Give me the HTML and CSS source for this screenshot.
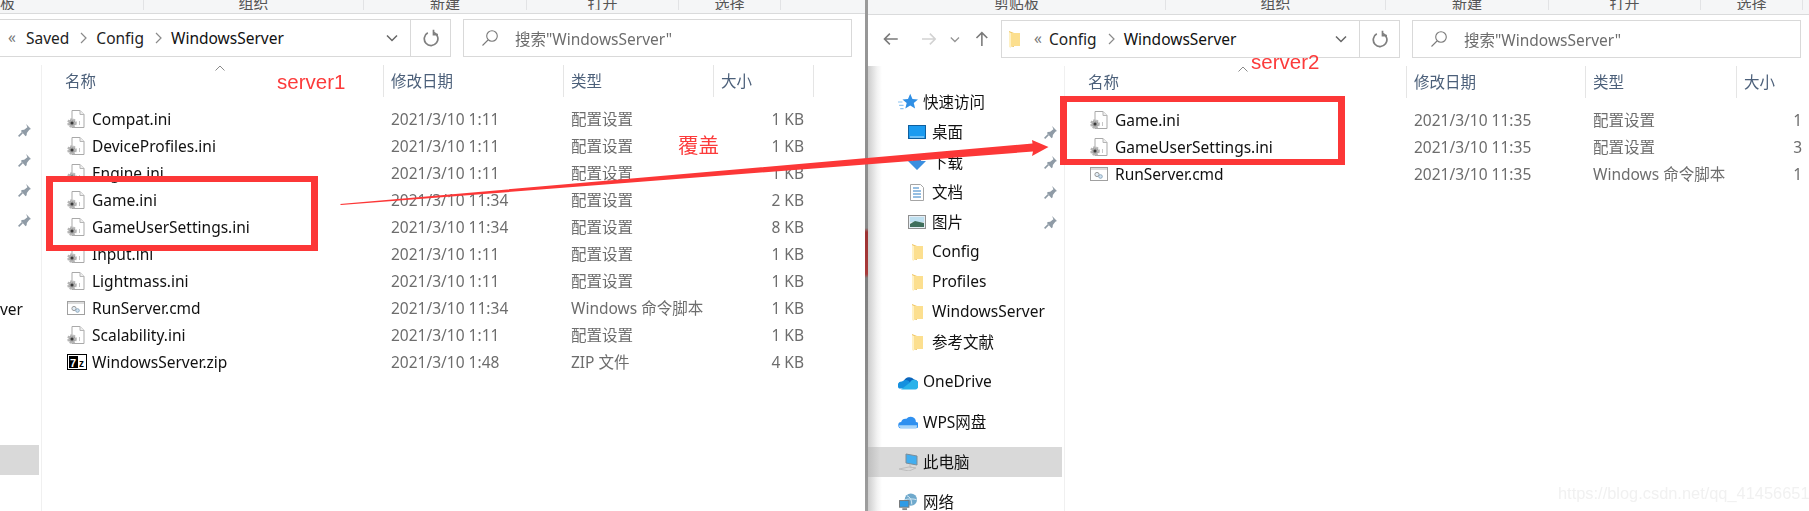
FILE: index.html
```html
<!DOCTYPE html>
<html lang="zh">
<head>
<meta charset="utf-8">
<title>WindowsServer</title>
<link rel="stylesheet" href="styles.css">
</head>
<body>
<svg class="defs" width="0" height="0" aria-hidden="true">
  <symbol id="gear-file" viewBox="0 0 18 20">
    <path d="M5 1.500h8l4 4v13H5z" fill="#fff" stroke="#a9a9a9"/>
    <path d="M13 1.500v4h4" fill="#eee" stroke="#b5b5b5"/>
    <circle cx="5" cy="14" r="3.400" fill="#a0a0a0" stroke="#b4b4b4" stroke-width="2.800" stroke-dasharray="1.800 1"/>
    <circle cx="5" cy="14" r="1.500" fill="#3a3a3a"/>
    <path d="M12.500 12v4" stroke="#c8c8c8"/>
  </symbol>
  <symbol id="cmd-file" viewBox="0 0 18 14">
    <rect x=".5" y=".5" width="17" height="13" fill="#fff" stroke="#a0a0a0"/>
    <rect x="1" y="1" width="16" height="2" fill="#dcdcdc"/>
    <circle cx="7" cy="7.500" r="2.100" fill="#e4eef6" stroke="#9a9a9a"/>
    <circle cx="10.500" cy="9.500" r="1.800" fill="#cfe2f2" stroke="#8fa9bd"/>
  </symbol>
  <symbol id="pin" viewBox="0 0 14 14">
    <path d="M8.500 1l4.500 4.500-1.500.8-2.300 3-.2 2.200-1 .8L3.700 7.500l.8-1 2.200-.2 3-2.300z" fill="#8f9ba6"/>
    <path d="M5 9l-3.500 3.500" stroke="#8f9ba6" stroke-width="1.500"/>
  </symbol>
  <symbol id="search" viewBox="0 0 18 18">
    <circle cx="11" cy="7" r="5.300" fill="none" stroke="#7a7a7a" stroke-width="1.100"/>
    <path d="M7 11l-5.500 5.500" stroke="#7a7a7a" stroke-width="1.100"/>
  </symbol>
  <symbol id="refresh" viewBox="0 0 16 18">
    <path d="M4.800 3.800A6.800 6.800 0 1 0 11 3.600" fill="none" stroke="#7f7f7f" stroke-width="1.700"/>
    <path d="M10.500 .8v4.800h4.400" fill="none" stroke="#7f7f7f" stroke-width="1.700"/>
  </symbol>
  <symbol id="chev-down" viewBox="0 0 12 8">
    <path d="M1 1.500l5 5 5-5" fill="none" stroke="#666" stroke-width="1.500"/>
  </symbol>
  <symbol id="crumb" viewBox="0 0 7 12">
    <path d="M1 1l5 5-5 5" fill="none" stroke="#8a8a8a" stroke-width="1.200"/>
  </symbol>
  <symbol id="sort" viewBox="0 0 10 6">
    <path d="M.5 5.500L5 1l4.500 4.500" fill="none" stroke="#8a8a8a"/>
  </symbol>
  <symbol id="folder" viewBox="0 0 12 18">
    <path d="M1 1l5 2v14l-5-1z" fill="#f0c869"/>
    <path d="M3 3h9v13H3z" fill="#fcdf8f"/>
    <path d="M1 2l2 1v15l-2-1z" fill="#fff1c4"/>
  </symbol>
  <symbol id="star" viewBox="0 0 18 16">
    <path d="M11 .5l2 4.800 5 .4-3.800 3.200 1.200 5-4.400-2.700-4.400 2.700 1.200-5L4 5.700l5-.4z" fill="#2f8fe5"/>
    <path d="M0 8h4M1 11h4M2 14h3" stroke="#8cc4f2"/>
  </symbol>
  <symbol id="desktop" viewBox="0 0 18 14">
    <rect x=".5" y=".5" width="17" height="13" fill="#1b9bf0" stroke="#0f5f9e"/>
    <path d="M2 12h14" stroke="#bfe3fb"/>
  </symbol>
  <symbol id="download" viewBox="0 0 18 16">
    <path d="M5 0h8v7h5l-9 9-9-9h5z" fill="#3a8fe0"/>
  </symbol>
  <symbol id="doc" viewBox="0 0 14 17">
    <path d="M.5.500h10l3 3v13H.5z" fill="#fff" stroke="#a5a5a5"/>
    <path d="M3 4h6M3 7h8M3 10h8M3 13h8" stroke="#2f7fc4"/>
  </symbol>
  <symbol id="picture" viewBox="0 0 18 14">
    <rect x=".5" y=".5" width="17" height="13" fill="#e6eef4" stroke="#8f8f8f"/>
    <rect x="2" y="2" width="14" height="5" fill="#bfe0f0"/>
    <path d="M2 9l5-3 9 2v4H2z" fill="#3f6f5c"/>
  </symbol>
  <symbol id="onedrive" viewBox="0 0 20 15">
    <path d="M6 6a6 6 0 0 1 10-1 4 4 0 0 1 4 5H6z" fill="#0a66bd"/>
    <path d="M1 14a4 4 0 0 1 3-7 5 5 0 0 1 8 1l6 6z" fill="#1590df"/>
    <path d="M12 8a3 3 0 0 1 8 3 3 3 0 0 1-3 4H3z" fill="#29b2ea"/>
  </symbol>
  <symbol id="wps" viewBox="0 0 19 14">
    <path d="M3.500 13a3 3 0 0 1-.5-6 4.500 4.500 0 0 1 5-3 5 5 0 0 1 9 3 3 3 0 0 1-.5 6z" fill="#2f90f0"/>
    <path d="M1 10h17v1.500a1.500 1.500 0 0 1-1.500 1.500h-13A2.500 2.500 0 0 1 1 10z" fill="#a6d4fa"/>
  </symbol>
  <symbol id="pc" viewBox="0 0 20 18">
    <path d="M8 1l11 2v9L8 10z" fill="#42aef0" stroke="#7d8d98"/>
    <path d="M12 11v3l5 1M1 16l10-2 7 1-7 3z" fill="none" stroke="#bdbdbd"/>
  </symbol>
  <symbol id="network" viewBox="0 0 20 19">
    <circle cx="13" cy="7" r="6.500" fill="#6fa9cc"/>
    <path d="M9 3c3 1 5 4 5 9M7 7c3-1 9-1 12 0" stroke="#d8eaf4" fill="none"/>
    <rect x="1" y="8" width="10" height="7" fill="#2f9be6" stroke="#777"/>
    <path d="M4 17h5" stroke="#888" stroke-width="2"/>
  </symbol>
  <symbol id="arrow-left" viewBox="0 0 16 14">
    <path d="M1.500 7H15M7 1.500L1.500 7 7 12.500" fill="none" stroke="currentColor" stroke-width="1.600"/>
  </symbol>
  <symbol id="arrow-up" viewBox="0 0 14 16">
    <path d="M7 15V1.500M1.500 7L7 1.500 12.500 7" fill="none" stroke="currentColor" stroke-width="1.600"/>
  </symbol>
</svg>

<main class="desktop">
  <section class="window window-left">
    <div class="ribbon">
      <div class="group group-l1"><span class="group-label label-end">剪贴板</span></div>
      <div class="group group-w220"><span class="group-label">组织</span></div>
      <div class="group group-w163"><span class="group-label">新建</span></div>
      <div class="group group-w152"><span class="group-label">打开</span></div>
      <div class="group group-w102"><span class="group-label">选择</span></div>
    </div>
    <div class="toolbar">
      <div class="address address-left">
        <div class="path path-left">
          <span class="more">«</span>
          <span class="crumb-text">Saved</span>
          <svg class="ico-crumb"><use href="#crumb"/></svg>
          <span class="crumb-text">Config</span>
          <svg class="ico-crumb"><use href="#crumb"/></svg>
          <span class="crumb-text crumb-last">WindowsServer</span>
          <svg class="ico-chev"><use href="#chev-down"/></svg>
        </div>
        <div class="refresh"><svg class="ico-refresh"><use href="#refresh"/></svg></div>
      </div>
      <div class="searchbox">
        <svg class="ico-search"><use href="#search"/></svg>
        <span>搜索"WindowsServer"</span>
      </div>
    </div>
    <div class="body">
      <nav class="nav nav-left">
        <div class="nav-row"></div>
        <div class="nav-row"><svg class="ico-pin"><use href="#pin"/></svg></div>
        <div class="nav-row"><svg class="ico-pin"><use href="#pin"/></svg></div>
        <div class="nav-row"><svg class="ico-pin"><use href="#pin"/></svg></div>
        <div class="nav-row"><svg class="ico-pin"><use href="#pin"/></svg></div>
        <div class="nav-row"></div>
        <div class="nav-row"></div>
        <div class="nav-row nav-clip"><span>WindowsServer</span></div>
        <div class="nav-row"></div>
        <div class="nav-row nav-gap"></div>
        <div class="nav-row nav-gap"></div>
        <div class="nav-row nav-gap nav-active"></div>
      </nav>
      <div class="pane">
        <div class="cols cols-left head">
          <div class="th th-name">名称<svg class="ico-sort"><use href="#sort"/></svg></div>
          <div class="th">修改日期</div>
          <div class="th">类型</div>
          <div class="th">大小</div>
        </div>
        <div class="rows">
          <div class="cols cols-left row"><div class="name"><svg class="ico-file"><use href="#gear-file"/></svg>Compat.ini</div><div class="cell">2021/3/10 1:11</div><div class="cell">配置设置</div><div class="cell size">1 KB</div></div>
          <div class="cols cols-left row"><div class="name"><svg class="ico-file"><use href="#gear-file"/></svg>DeviceProfiles.ini</div><div class="cell">2021/3/10 1:11</div><div class="cell">配置设置</div><div class="cell size">1 KB</div></div>
          <div class="cols cols-left row"><div class="name"><svg class="ico-file"><use href="#gear-file"/></svg>Engine.ini</div><div class="cell">2021/3/10 1:11</div><div class="cell">配置设置</div><div class="cell size">1 KB</div></div>
          <div class="cols cols-left row"><div class="name"><svg class="ico-file"><use href="#gear-file"/></svg>Game.ini</div><div class="cell">2021/3/10 11:34</div><div class="cell">配置设置</div><div class="cell size">2 KB</div></div>
          <div class="cols cols-left row"><div class="name"><svg class="ico-file"><use href="#gear-file"/></svg>GameUserSettings.ini</div><div class="cell">2021/3/10 11:34</div><div class="cell">配置设置</div><div class="cell size">8 KB</div></div>
          <div class="cols cols-left row"><div class="name"><svg class="ico-file"><use href="#gear-file"/></svg>Input.ini</div><div class="cell">2021/3/10 1:11</div><div class="cell">配置设置</div><div class="cell size">1 KB</div></div>
          <div class="cols cols-left row"><div class="name"><svg class="ico-file"><use href="#gear-file"/></svg>Lightmass.ini</div><div class="cell">2021/3/10 1:11</div><div class="cell">配置设置</div><div class="cell size">1 KB</div></div>
          <div class="cols cols-left row"><div class="name"><svg class="ico-cmd"><use href="#cmd-file"/></svg>RunServer.cmd</div><div class="cell">2021/3/10 11:34</div><div class="cell">Windows 命令脚本</div><div class="cell size">1 KB</div></div>
          <div class="cols cols-left row"><div class="name"><svg class="ico-file"><use href="#gear-file"/></svg>Scalability.ini</div><div class="cell">2021/3/10 1:11</div><div class="cell">配置设置</div><div class="cell size">1 KB</div></div>
          <div class="cols cols-left row"><div class="name"><span class="zip-badge"><svg class="ico-7z" viewBox="0 0 20 16"><rect x=".5" y=".5" width="19" height="15" fill="#fff" stroke="#000"/><rect x="2" y="2" width="9" height="12" fill="#000"/><text x="3" y="12.500" class="zip-seven">7</text><text x="12" y="12.500" class="zip-z">z</text></svg></span>WindowsServer.zip</div><div class="cell">2021/3/10 1:48</div><div class="cell">ZIP 文件</div><div class="cell size">4 KB</div></div>
        </div>
      </div>
    </div>
  </section>

  <div class="split"></div>

  <section class="window window-right">
    <div class="ribbon ribbon-right">
      <div class="group group-r1"><span class="group-label">剪贴板</span></div>
      <div class="group group-w220"><span class="group-label">组织</span></div>
      <div class="group group-w163"><span class="group-label">新建</span></div>
      <div class="group group-w152"><span class="group-label">打开</span></div>
      <div class="group group-w102"><span class="group-label">选择</span></div>
    </div>
    <div class="toolbar">
      <div class="navbtns">
        <svg class="ico-back"><use href="#arrow-left"/></svg>
        <svg class="ico-forward"><use href="#arrow-left"/></svg>
        <svg class="ico-recent"><use href="#chev-down"/></svg>
        <svg class="ico-up"><use href="#arrow-up"/></svg>
      </div>
      <div class="address address-right">
        <div class="path path-right">
          <svg class="ico-addr-folder"><use href="#folder"/></svg>
          <span class="more">«</span>
          <span class="crumb-text">Config</span>
          <svg class="ico-crumb"><use href="#crumb"/></svg>
          <span class="crumb-text crumb-last">WindowsServer</span>
          <svg class="ico-chev"><use href="#chev-down"/></svg>
        </div>
        <div class="refresh"><svg class="ico-refresh"><use href="#refresh"/></svg></div>
      </div>
      <div class="searchbox">
        <svg class="ico-search"><use href="#search"/></svg>
        <span>搜索"WindowsServer"</span>
      </div>
    </div>
    <div class="body">
      <nav class="nav nav-right">
        <div class="nav-row top"><svg class="ico-top"><use href="#star"/></svg><span>快速访问</span></div>
        <div class="nav-row sub"><svg class="ico-sub ico-h14"><use href="#desktop"/></svg><span>桌面</span><svg class="ico-pin"><use href="#pin"/></svg></div>
        <div class="nav-row sub"><svg class="ico-sub ico-h16"><use href="#download"/></svg><span>下载</span><svg class="ico-pin"><use href="#pin"/></svg></div>
        <div class="nav-row sub"><svg class="ico-doc"><use href="#doc"/></svg><span>文档</span><svg class="ico-pin"><use href="#pin"/></svg></div>
        <div class="nav-row sub"><svg class="ico-sub ico-h14"><use href="#picture"/></svg><span>图片</span><svg class="ico-pin"><use href="#pin"/></svg></div>
        <div class="nav-row sub"><svg class="ico-folder"><use href="#folder"/></svg><span>Config</span></div>
        <div class="nav-row sub"><svg class="ico-folder"><use href="#folder"/></svg><span>Profiles</span></div>
        <div class="nav-row sub"><svg class="ico-folder"><use href="#folder"/></svg><span>WindowsServer</span></div>
        <div class="nav-row sub"><svg class="ico-folder"><use href="#folder"/></svg><span>参考文献</span></div>
        <div class="nav-row top nav-gap"><svg class="ico-top"><use href="#onedrive"/></svg><span>OneDrive</span></div>
        <div class="nav-row top nav-gap"><svg class="ico-top"><use href="#wps"/></svg><span>WPS网盘</span></div>
        <div class="nav-row top nav-gap nav-active"><svg class="ico-top"><use href="#pc"/></svg><span>此电脑</span></div>
        <div class="nav-row top nav-gap"><svg class="ico-top"><use href="#network"/></svg><span>网络</span></div>
      </nav>
      <div class="pane">
        <div class="cols cols-right head">
          <div class="th th-name">名称<svg class="ico-sort"><use href="#sort"/></svg></div>
          <div class="th">修改日期</div>
          <div class="th">类型</div>
          <div class="th th-last">大小</div>
        </div>
        <div class="rows">
          <div class="cols cols-right row"><div class="name"><svg class="ico-file"><use href="#gear-file"/></svg>Game.ini</div><div class="cell">2021/3/10 11:35</div><div class="cell">配置设置</div><div class="cell size size-cut">1</div></div>
          <div class="cols cols-right row"><div class="name"><svg class="ico-file"><use href="#gear-file"/></svg>GameUserSettings.ini</div><div class="cell">2021/3/10 11:35</div><div class="cell">配置设置</div><div class="cell size size-cut">3</div></div>
          <div class="cols cols-right row"><div class="name"><svg class="ico-cmd"><use href="#cmd-file"/></svg>RunServer.cmd</div><div class="cell">2021/3/10 11:35</div><div class="cell">Windows 命令脚本</div><div class="cell size size-cut">1</div></div>
        </div>
      </div>
    </div>
  </section>

  <div class="mark mark-box box-one"></div>
  <div class="mark mark-box box-two"></div>
  <span class="mark mark-text text-server1">server1</span>
  <span class="mark mark-text text-server2">server2</span>
  <span class="mark mark-text text-cover">覆盖</span>
  <svg class="mark mark-arrow" viewBox="0 0 1809 511"><polygon points="340,204 341,205 1033,151.500 1032,156 1048.500,147 1032,140 1032.500,143.500"/></svg>
  <span class="watermark">https://blog.csdn.net/qq_41456651</span>
</main>
</body>
</html>
```
FILE: styles.css
```css
* { box-sizing: border-box; }

html, body {
  margin: 0;
  padding: 0;
  background: #fff;
}

body {
  width: 1809px;
  height: 511px;
  overflow: hidden;
  font-family: "Noto Sans", "Noto Sans CJK SC", sans-serif;
  font-size: 15.5px;
  color: #111;
}

.defs { position: absolute; }

.desktop {
  position: relative;
  display: flex;
  width: 1809px;
  height: 511px;
  overflow: hidden;
}

.window {
  display: flex;
  flex-direction: column;
  height: 511px;
  overflow: hidden;
  filter: blur(.3px);
}

.window-left { width: 865px; }
.window-right { width: 941px; }

.split {
  width: 3px;
  height: 511px;
  background: linear-gradient(180deg, #9a9a9a 0, #8a8a8a 228px, #9c3232 232px, #a83a3a 274px, #7d7d7d 278px, #9e9e9e 100%);
}

/* ribbon */
.ribbon {
  display: flex;
  flex: none;
  height: 14px;
  background: #f5f6f7;
  border-bottom: 1px solid #dadbdc;
  overflow: hidden;
}

.ribbon-right { height: 15px; }

.group {
  display: flex;
  flex: none;
  justify-content: center;
  height: 10px;
  border-right: 1px solid #e2e3e5;
  overflow: hidden;
  color: #555;
}

.group-label {
  font-size: 15px;
  line-height: 6px;
}

.group-l1 { width: 144px; justify-content: flex-end; padding-right: 128px; }
.group-r1 { width: 298px; }
.group-w220 { width: 220px; }
.group-w163 { width: 163px; }
.group-w152 { width: 152px; }
.group-w102 { width: 102px; }

.label-end { white-space: nowrap; }

/* toolbar */
.toolbar {
  display: flex;
  flex: none;
  gap: 12px;
  height: 51px;
  padding-top: 5px;
}

.address,
.searchbox {
  display: flex;
  align-items: center;
  height: 38px;
  border: 1px solid #d9d9d9;
  background: #fff;
}

.address-left { width: 451px; border-left: 0; }
.address-right { width: 399px; }

.searchbox {
  width: 389px;
  padding-left: 17px;
  color: #6d6d6d;
  gap: 16px;
}

.path {
  display: flex;
  flex: 1;
  align-items: center;
  height: 100%;
  white-space: nowrap;
  color: #222;
}

.path-left { padding-left: 8px; }
.path-right { padding-left: 6px; }

.more { width: 8px; color: #777; margin-right: 10px; line-height: 1; }
.path-right .more { margin-left: 14px; margin-right: 7px; }

.crumb-text { margin-right: 11px; }
.ico-crumb { width: 7px; height: 12px; margin-right: 9px; flex: none; }
.crumb-last { color: #111; margin-right: auto; }

.ico-chev { width: 12px; height: 8px; flex: none; margin-right: 12px; }
.ico-addr-folder { width: 12px; height: 18px; flex: none; }

.refresh {
  display: flex;
  align-items: center;
  justify-content: center;
  width: 40px;
  height: 100%;
  border-left: 1px solid #d9d9d9;
  flex: none;
}

.ico-refresh { width: 16px; height: 18px; }
.ico-search { width: 18px; height: 18px; flex: none; }

.navbtns {
  position: relative;
  display: flex;
  align-items: center;
  width: 121px;
  height: 38px;
  padding-left: 15px;
}

.ico-back { width: 16px; height: 14px; color: #7a7a7a; margin-right: 22px; }
.ico-forward { width: 16px; height: 14px; color: #d2d2d2; transform: scaleX(-1); margin-right: 14px; }
.ico-recent { width: 10px; height: 7px; margin-right: 15px; opacity: .7; }
.ico-up { width: 14px; height: 16px; color: #7a7a7a; }

/* body */
.body {
  display: flex;
  flex: 1;
  min-height: 0;
}

.nav {
  flex: none;
  overflow: hidden;
  border-right: 1px solid #f0f0f0;
  white-space: nowrap;
}

.nav-left { width: 42px; padding-top: 20px; }

.nav-right {
  width: 197px;
  padding-top: 21px;
  background: linear-gradient(90deg, #cdcdcd 0, #f2f2f2 9px, #fff 14px);
}

.nav-row {
  display: flex;
  align-items: center;
  height: 30px;
}

.nav-row span { margin-bottom: 2px; }

.nav-gap { margin-top: 10px; }

.nav-left .nav-row { justify-content: flex-end; padding-right: 7px; margin-right: 2px; }
.nav-left .nav-clip { padding-right: 16px; overflow: hidden; }
.nav-left .nav-clip span { flex: none; }
.nav-left .nav-active { background: #d9d9d9; }

.nav-right .nav-row { margin-right: 2px; padding-right: 4px; }
.nav-right .nav-active { background: linear-gradient(90deg, #bfbfbf 0, #d9d9d9 12px); height: 30px; }

.top { padding-left: 30px; }
.sub { padding-left: 40px; }

.top span { margin-left: 5px; }
.sub span { margin-left: 6px; flex: 1; }

.ico-top { width: 20px; height: 18px; flex: none; }
.ico-sub { width: 18px; flex: none; }
.ico-h14 { height: 14px; }
.ico-h16 { height: 16px; }
.ico-doc { width: 14px; height: 17px; margin: 0 2px; flex: none; }
.ico-folder { width: 12px; height: 18px; margin: 0 3px; flex: none; }
.ico-pin { width: 15px; height: 15px; flex: none; }

/* file list */
.pane {
  flex: 1;
  min-width: 0;
  overflow: hidden;
}

.cols { display: grid; }
.cols-left { grid-template-columns: 342px 180px 150px 100px; }
.cols-right { grid-template-columns: 342px 179px 151px 72px; }

.head { height: 32px; }

.th {
  display: flex;
  align-items: center;
  padding-left: 7px;
  padding-bottom: 2px;
  border-right: 1px solid #e5e5e5;
  color: #4c607a;
  white-space: nowrap;
}

.th-last { border-right: 0; }

.th-name {
  position: relative;
  padding-left: 23px;
}

.ico-sort {
  position: absolute;
  top: 0;
  left: 173px;
  width: 10px;
  height: 6px;
}

.rows { padding-top: 9px; }

.row {
  height: 27px;
  align-items: center;
  padding-bottom: 2px;
  white-space: nowrap;
}

.name {
  display: flex;
  align-items: center;
  padding-left: 25px;
  color: #111;
}

.ico-file { width: 18px; height: 20px; margin-right: 7px; flex: none; }
.ico-cmd { width: 18px; height: 14px; margin-right: 7px; flex: none; }

.zip-badge { display: flex; margin-right: 5px; flex: none; }
.ico-7z { width: 20px; height: 16px; }
.zip-seven { font: 700 11px "Liberation Sans", sans-serif; fill: #fff; }
.zip-z { font: 700 10px "Liberation Sans", sans-serif; fill: #000; }

.cell {
  padding-left: 7px;
  color: #6d6d6d;
}

.size {
  padding-left: 0;
  padding-right: 10px;
  text-align: right;
}

.size-cut { padding-right: 7px; }

/* annotations drawn over the screenshot */
.mark { position: absolute; }

.mark-box { border: solid #fc3737; border-width: 6px 7px; }

.box-one { left: 46px; top: 176px; width: 272px; height: 75px; }
.box-two { left: 1060px; top: 96px; width: 285px; height: 69px; }

.mark-text {
  color: #fc3b3b;
  font-family: "Liberation Sans", "Noto Sans CJK SC", sans-serif;
  font-size: 20.5px;
  line-height: 24px;
  white-space: nowrap;
}

.text-server1 { left: 277px; top: 70px; }
.text-server2 { left: 1251px; top: 50px; }
.text-cover { left: 678px; top: 134px; }

.mark-arrow {
  left: 0;
  top: 0;
  width: 1809px;
  height: 511px;
  fill: #fc3737;
}

.watermark {
  position: absolute;
  left: 1558px;
  top: 483px;
  font-family: "Liberation Sans", sans-serif;
  font-size: 16.4px;
  line-height: 20px;
  color: #f1f1f1;
  white-space: nowrap;
}
```
